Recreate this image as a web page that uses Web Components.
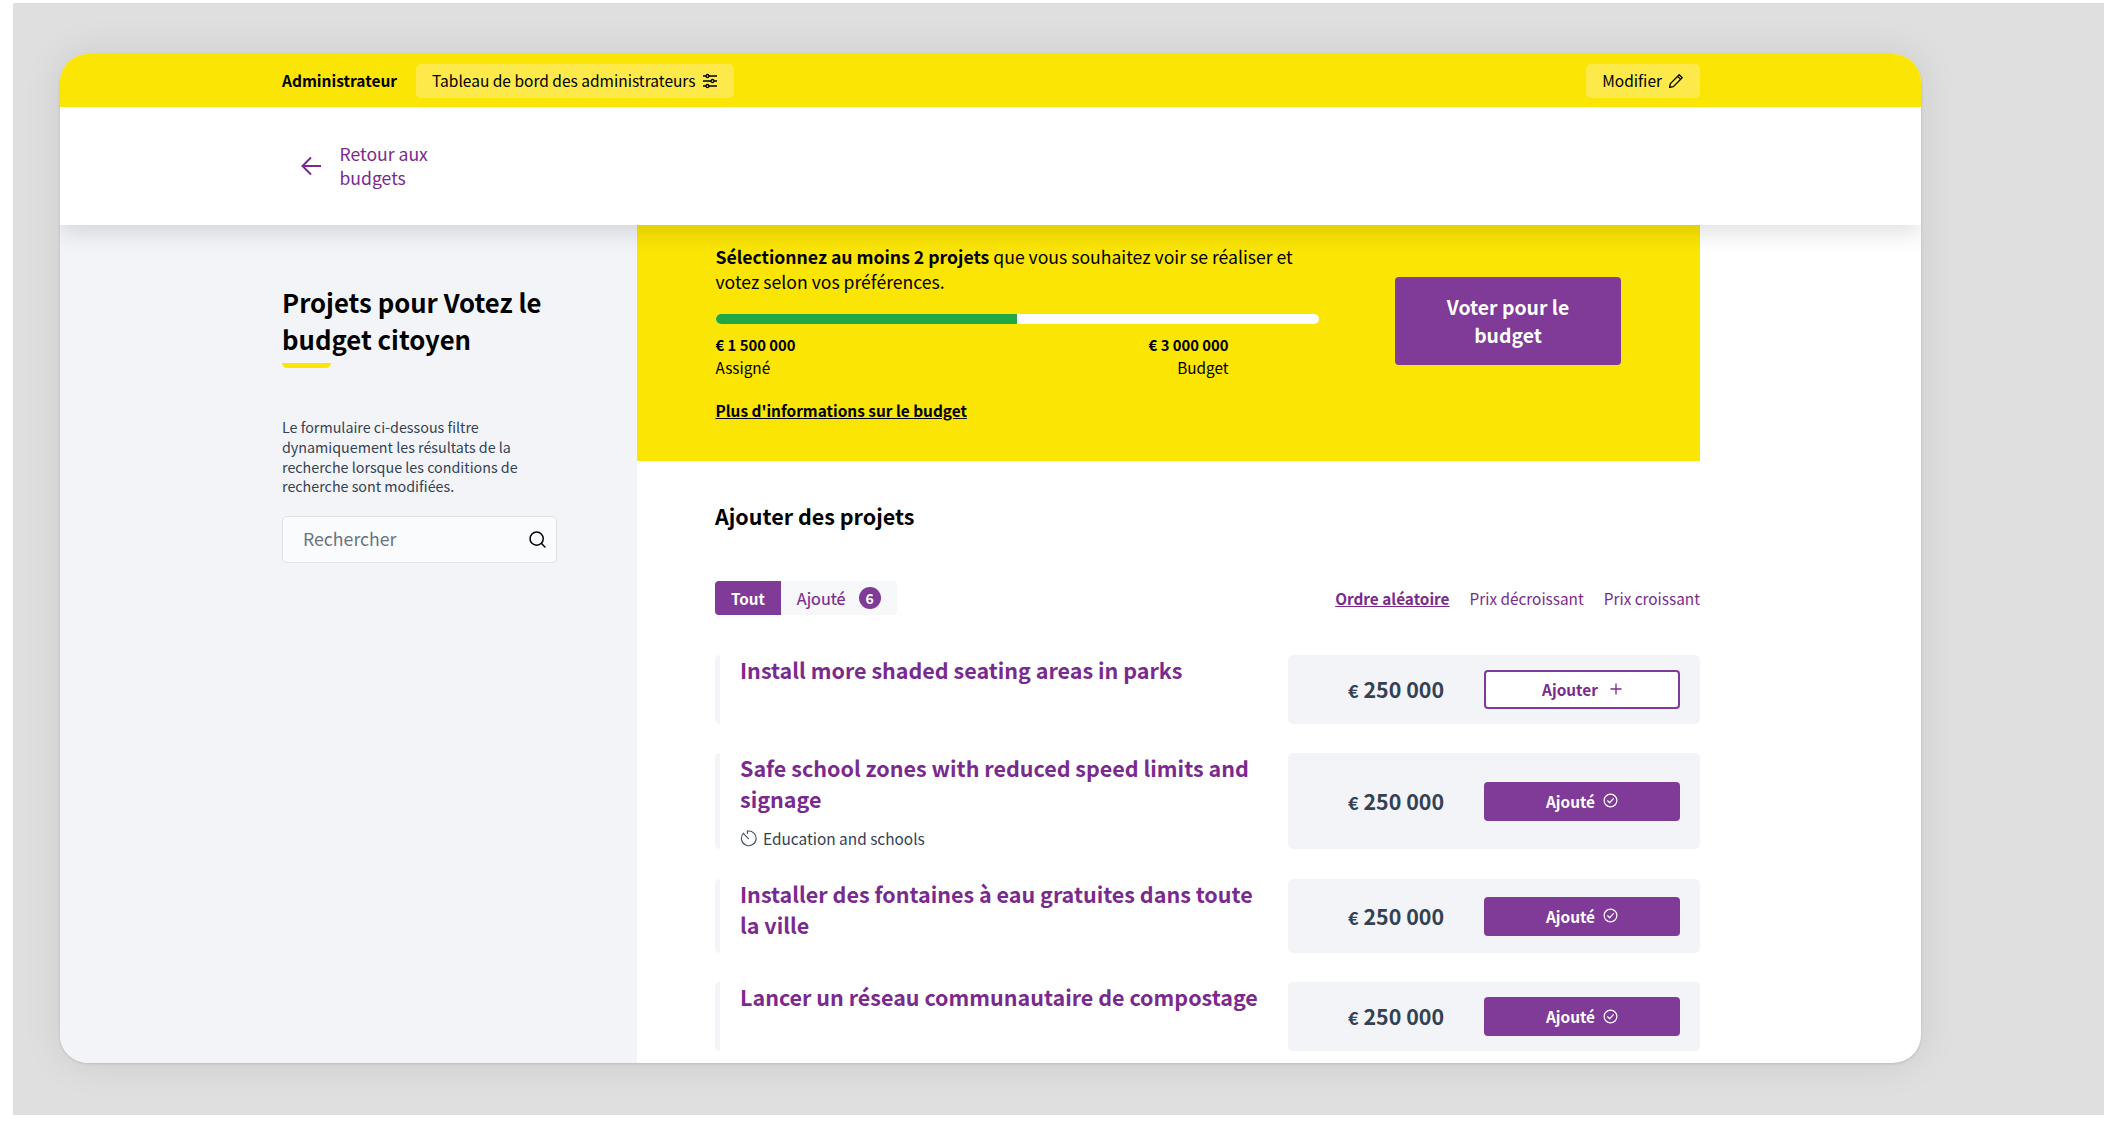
<!DOCTYPE html>
<html lang="fr">
<head>
<meta charset="utf-8">
<title>Budget citoyen</title>
<style>
  html, body { margin: 0; padding: 0; background: #fff; }
  body {
    font-family: "Noto Sans CJK SC", "Noto Sans", sans-serif;
    color: #000;
    height: 1130px;
    overflow: hidden;
    --yellow: #fbe505;
    --purple: #803a98;
    --purple-text: #7a2a8e;
    --panel: #f3f4f8;
    --slate: #334155;
  }
</style>
</head>
<body>
<budget-backdrop>
  <budget-window>
    <admin-bar slot="top"></admin-bar>
    <back-nav slot="top"></back-nav>
    <filter-sidebar slot="side"></filter-sidebar>
    <budget-panel slot="main"></budget-panel>
    <project-list slot="main">
      <project-row title="Install more shaded seating areas in parks" state="add" height="69" after="29"></project-row>
      <project-row title="Safe school zones with reduced speed limits and signage" category="Education and schools" state="added" height="96" after="30"></project-row>
      <project-row title="Installer des fontaines à eau gratuites dans toute la ville" state="added" height="74" after="29"></project-row>
      <project-row title="Lancer un réseau communautaire de compostage" state="added" height="69" after="0"></project-row>
    </project-list>
  </budget-window>
</budget-backdrop>

<script>
// petites icones partagees
const ICONS = {
  sliders: `<svg viewBox="0 0 16 16" fill="none" stroke="currentColor" stroke-width="1.3"><path d="M1 3h14M1 8h14M1 13h14"/><circle cx="5.5" cy="3" r="1.5" fill="#fdea4a"/><circle cx="10.5" cy="8" r="1.5" fill="#fdea4a"/><circle cx="5.5" cy="13" r="1.5" fill="#fdea4a"/></svg>`,
  pencil: `<svg viewBox="0 0 16 16" fill="none" stroke="currentColor" stroke-width="1.3" stroke-linejoin="round"><path d="M11.2 1.8l3 3L5.4 13.6 1.6 14.4l.8-3.8z"/><path d="M9.6 3.4l3 3"/></svg>`,
  arrow: `<svg viewBox="0 0 20 20" fill="none" stroke="currentColor" stroke-width="2"><path d="M20 10H2M10 1.5L1.5 10l8.5 8.5"/></svg>`,
  search: `<svg viewBox="0 0 16 16" fill="none" stroke="currentColor" stroke-width="1.4" stroke-linecap="round"><circle cx="7.2" cy="7.2" r="6.2"/><path d="M11.8 11.8l3.2 3.2"/></svg>`,
  clock: `<svg viewBox="0 0 16 16" fill="none" stroke="currentColor" stroke-width="1.1" stroke-linecap="round"><path d="M3.4 3a6.9 6.9 0 1 0 3.6-1.9"/><path d="M7.9 8.2L3.6 3.6"/><path d="M7 1.1v2.2"/></svg>`,
  check: `<svg viewBox="0 0 16 16" fill="none" stroke="currentColor" stroke-width="1.3" stroke-linecap="round" stroke-linejoin="round"><circle cx="8" cy="8" r="6.8"/><path d="M5 8.3l2.1 2.1 4-4.4"/></svg>`,
  plus: `<svg viewBox="0 0 12 12" fill="none" stroke="currentColor" stroke-width="1.3"><path d="M6 .5v11M.5 6h11"/></svg>`
};

class BudgetBackdrop extends HTMLElement {
  constructor() {
    super();
    this.attachShadow({ mode: 'open' }).innerHTML = `
      <style>
        :host {
          display: block;
          box-sizing: border-box;
          margin: 3px 0 0 13px;
          height: 1112px;
          padding: 51px 183px 52px 47px;
          background: #dfdfdf;
        }
      </style>
      <slot></slot>`;
  }
}

class BudgetWindow extends HTMLElement {
  constructor() {
    super();
    this.attachShadow({ mode: 'open' }).innerHTML = `
      <style>
        :host {
          display: flex;
          flex-direction: column;
          height: 1009px;
          border-radius: 28px;
          overflow: hidden;
          background: #fff;
          box-shadow: 0 0 40px rgba(0,0,0,.09), 0 1px 3px rgba(0,0,0,.12);
        }
        .top { position: relative; z-index: 2; box-shadow: 0 8px 22px rgba(0,0,0,.12); }
        .body { flex: 1; display: grid; grid-template-columns: 577px 1063px 1fr; min-height: 0; }
        .side { background: var(--panel); }
        .main { min-width: 0; }
      </style>
      <div class="top"><slot name="top"></slot></div>
      <div class="body">
        <div class="side"><slot name="side"></slot></div>
        <div class="main"><slot name="main"></slot></div>
      </div>`;
  }
}

class AdminBar extends HTMLElement {
  constructor() {
    super();
    this.attachShadow({ mode: 'open' }).innerHTML = `
      <style>
        :host {
          display: flex;
          align-items: center;
          box-sizing: border-box;
          height: 53px;
          padding: 0 221px 0 222px;
          background: var(--yellow);
          font-size: 15.5px;
        }
        b { font-weight: 700; margin-right: 19px; padding-bottom: 2px; }
        .chip {
          display: flex;
          align-items: center;
          gap: 6px;
          height: 34px;
          padding: 0 16px;
          border-radius: 5px;
          background: #fdea4a;
        }
        .chip span { padding-bottom: 2px; }
        .chip svg { width: 16px; height: 16px; }
        .right { margin-left: auto; }
      </style>
      <b>Administrateur</b>
      <div class="chip"><span>Tableau de bord des administrateurs</span> ${ICONS.sliders}</div>
      <div class="chip right"><span>Modifier</span> ${ICONS.pencil}</div>`;
  }
}

class BackNav extends HTMLElement {
  constructor() {
    super();
    this.attachShadow({ mode: 'open' }).innerHTML = `
      <style>
        :host {
          display: flex;
          align-items: center;
          box-sizing: border-box;
          height: 118px;
          padding-left: 241px;
          background: #fff;
          color: var(--purple-text);
          font-size: 17.6px;
          line-height: 24.5px;
        }
        svg { width: 20px; height: 20px; margin-right: 18.5px; }
      </style>
      ${ICONS.arrow}
      <span>Retour aux<br>budgets</span>`;
  }
}

class FilterSidebar extends HTMLElement {
  constructor() {
    super();
    this.attachShadow({ mode: 'open' }).innerHTML = `
      <style>
        :host { display: block; box-sizing: border-box; padding: 58px 0 0 222px; width: 497px; }
        h2 { margin: 0; font-size: 25.7px; line-height: 37px; font-weight: 600; color: #000; }
        .bar { width: 49px; height: 5px; margin-top: 6px; background: var(--yellow); border-radius: 0 0 5px 5px; }
        p { margin: 49px 0 0; font-size: 14.3px; line-height: 19.8px; color: var(--slate); }
        .search {
          display: flex;
          align-items: center;
          justify-content: space-between;
          box-sizing: border-box;
          width: 275px;
          height: 47px;
          margin-top: 19.8px;
          padding: 0 10px 0 20px;
          background: #fafbfd;
          border: 1px solid #e0e2e7;
          border-radius: 5px;
          color: #6b7280;
          font-size: 17.7px;
        }
        .search span { padding-bottom: 2px; }
        .search svg { width: 17px; height: 17px; color: #000; }
      </style>
      <h2>Projets pour Votez le budget citoyen</h2>
      <div class="bar"></div>
      <p>Le formulaire ci-dessous filtre dynamiquement les résultats de la recherche lorsque les conditions de recherche sont modifiées.</p>
      <div class="search"><span>Rechercher</span>${ICONS.search}</div>`;
  }
}

class BudgetPanel extends HTMLElement {
  constructor() {
    super();
    this.attachShadow({ mode: 'open' }).innerHTML = `
      <style>
        :host {
          display: flex;
          box-sizing: border-box;
          height: 236px;
          padding: 20px 78.5px 0 78.5px;
          background: var(--yellow);
        }
        .info { width: 603.5px; }
        .lead { margin: 0; font-size: 17.6px; line-height: 24.5px; }
        .lead b { font-weight: 700; }
        .track { height: 10px; margin-top: 20px; border-radius: 5px; background: #fff; overflow: hidden; }
        .fill { width: 50%; height: 100%; background: #22a745; }
        .figures { display: flex; justify-content: space-between; width: 513px; margin-top: 9.5px; font-size: 15.3px; line-height: 22px; }
        .figures div:last-child { text-align: right; }
        .figures b { display: block; font-weight: 600; font-size: 14.8px; }
        a { display: inline-block; margin-top: 21.5px; font-size: 15.4px; line-height: 22px; font-weight: 600; color: #000; text-decoration: underline; }
        button {
          flex: none;
          width: 226px;
          height: 88px;
          margin: 32px 0 0 76px;
          padding: 0 30px;
          border: 0;
          border-radius: 4px;
          background: var(--purple);
          color: #fff;
          font: 600 19.4px/28px "Noto Sans CJK SC", "Noto Sans", sans-serif;
        }
      </style>
      <div class="info">
        <p class="lead"><b>Sélectionnez au moins 2 projets</b> <span>que vous souhaitez voir se réaliser et</span><br><span>votez selon vos préférences.</span></p>
        <div class="track"><div class="fill"></div></div>
        <div class="figures">
          <div><b>€ 1 500 000</b>Assigné</div>
          <div><b>€ 3 000 000</b>Budget</div>
        </div>
        <a>Plus d'informations sur le budget</a>
      </div>
      <button>Voter pour le budget</button>`;
  }
}

class ProjectList extends HTMLElement {
  constructor() {
    super();
    this.attachShadow({ mode: 'open' }).innerHTML = `
      <style>
        :host { display: block; box-sizing: border-box; padding: 39px 0 0 78px; }
        h3 { margin: 0; font-size: 21.5px; line-height: 32px; font-weight: 600; color: #000; }
        .toolbar { display: flex; align-items: center; justify-content: space-between; margin-top: 49px; }
        .tabs { display: flex; height: 34px; border-radius: 4px; background: #f7f8fa; font-size: 16.2px; color: var(--purple-text); }
        .tab { display: flex; align-items: center; padding: 0 16px; -webkit-text-stroke: .2px currentColor; }
        .tab.on { background: var(--purple); color: #fff; font-size: 15.2px; font-weight: 600; border-radius: 4px 0 0 4px; -webkit-text-stroke: 0; }
        .count {
          display: inline-flex;
          align-items: center;
          justify-content: center;
          width: 22px;
          height: 22px;
          margin-left: 13px;
          border-radius: 50%;
          background: var(--purple);
          color: #fff;
          font-size: 14px;
          font-weight: 600;
          -webkit-text-stroke: 0;
        }
        .sort { display: flex; gap: 20px; font-size: 15.35px; color: var(--purple-text); }
        .sort .on { font-weight: 600; text-decoration: underline; }
        .rows { display: flex; flex-direction: column; margin-top: 40px; }
      </style>
      <h3>Ajouter des projets</h3>
      <div class="toolbar">
        <div class="tabs">
          <div class="tab on">Tout</div>
          <div class="tab">Ajouté<span class="count">6</span></div>
        </div>
        <div class="sort">
          <span class="on">Ordre aléatoire</span>
          <span>Prix décroissant</span>
          <span>Prix croissant</span>
        </div>
      </div>
      <div class="rows"><slot></slot></div>`;
  }
}

class ProjectRow extends HTMLElement {
  connectedCallback() {
    if (this.shadowRoot) return;
    const title = this.getAttribute('title') || '';
    const category = this.getAttribute('category');
    const added = this.getAttribute('state') === 'added';
    const height = parseInt(this.getAttribute('height')) || 69;
    const after = parseInt(this.getAttribute('after')) || 0;
    this.attachShadow({ mode: 'open' }).innerHTML = `
      <style>
        :host { display: grid; grid-template-columns: 1fr 412px; gap: 22px; height: ${height}px; margin-bottom: ${after}px; }
        .text { min-width: 0; padding-left: 20px; border-left: 5px solid var(--panel); border-radius: 5px 0 0 5px; }
        h4 { margin: -1px 0 0; font-size: 21.5px; line-height: 31px; font-weight: 600; color: var(--purple-text); }
        .cat { display: flex; align-items: center; gap: 6px; margin-top: 13px; font-size: 15.4px; line-height: 22px; color: var(--slate); }
        .cat svg { width: 17px; height: 17px; color: #4b5563; }
        .box { display: flex; align-items: center; box-sizing: border-box; padding: 0 20px 0 60px; background: var(--panel); border-radius: 5px; }
        .price { width: 136px; padding-bottom: 2px; font-size: 21.4px; font-weight: 600; color: var(--slate); white-space: nowrap; }
        .price i { font-style: normal; font-size: 18px; }
        .btn {
          display: flex;
          align-items: center;
          justify-content: center;
          gap: 8px;
          box-sizing: border-box;
          width: 196px;
          height: 39px;
          padding-bottom: 1px;
          border: 2px solid var(--purple);
          border-radius: 4px;
          font-size: 15.4px;
          font-weight: 600;
          background: #fff;
          color: var(--purple-text);
        }
        .btn.on { background: var(--purple); color: #fff; }
        .btn svg { width: 15px; height: 15px; }
        .btn:not(.on) svg { width: 12px; height: 12px; margin-left: 4px; }
      </style>
      <div class="text">
        <h4>${title}</h4>
        ${category ? `<div class="cat">${ICONS.clock}<span>${category}</span></div>` : ''}
      </div>
      <div class="box">
        <div class="price"><i>€</i> 250 000</div>
        <div class="btn ${added ? 'on' : ''}">${added ? 'Ajouté ' + ICONS.check : 'Ajouter ' + ICONS.plus}</div>
      </div>`;
  }
}

customElements.define('budget-backdrop', BudgetBackdrop);
customElements.define('budget-window', BudgetWindow);
customElements.define('admin-bar', AdminBar);
customElements.define('back-nav', BackNav);
customElements.define('filter-sidebar', FilterSidebar);
customElements.define('budget-panel', BudgetPanel);
customElements.define('project-list', ProjectList);
customElements.define('project-row', ProjectRow);
</script>
</body>
</html>
